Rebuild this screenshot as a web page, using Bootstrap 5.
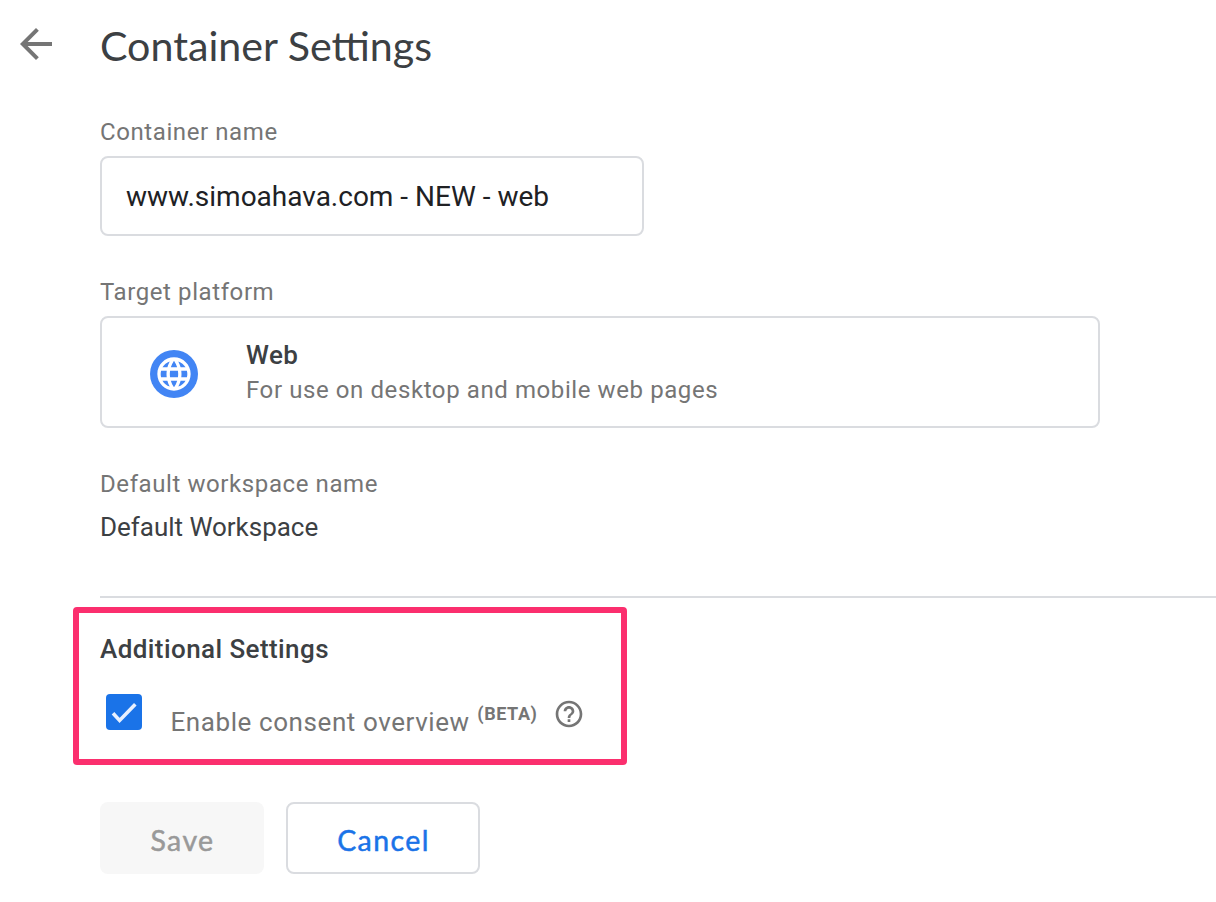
<!DOCTYPE html>
<html lang="en">
<head>
<meta charset="utf-8">
<meta name="viewport" content="width=device-width, initial-scale=1">
<title>Container Settings</title>
<link href="https://cdn.jsdelivr.net/npm/bootstrap@5.3.0/dist/css/bootstrap.min.css" rel="stylesheet">
<script src="https://cdn.jsdelivr.net/npm/bootstrap@5.3.0/dist/js/bootstrap.bundle.min.js" defer></script>
<style>
body { font-family: Roboto, "Liberation Sans", sans-serif; color: #3c4043; height: 902px; overflow: hidden; }
.page-head { height: 116px; padding-left: 12px; padding-top: 20px; }
.back-btn { width: 48px; height: 48px; margin-right: 40px; color: #757575; }
.page-title { font-family: Lato, sans-serif; font-size: 41.2px; line-height: 50px; }
.settings { padding-left: 100px; }
.caption { font-size: 24px; line-height: 32px; letter-spacing: .59px; color: #757575; }
.field-gap { margin-top: 40px; }
.outlined { border: 2px solid #dadce0; border-radius: 8px; }
.name-input { width: 544px; height: 80px; margin-top: 8px; padding: 0 24px; font-size: 28px; color: #202124; box-shadow: none; }
.platform { width: 1000px; height: 112px; margin-top: 8px; padding-left: 48px; }
.platform-icon { margin-top: 4px; }
.platform-title { font-size: 26px; font-weight: 500; line-height: 34px; letter-spacing: .4px; margin-bottom: 2px; }
.workspace { font-size: 26px; line-height: 34px; margin-top: 10px; letter-spacing: -.03px; }
.rule { height: 2px; margin-top: 52px; background: #dadce0; }
.highlight { width: 554px; height: 158px; margin: 9px 0 0 73px; border: 6px solid #fb2f6e; border-radius: 4px; padding: 19px 0 0 21px; }
.section-title { font-size: 26px; font-weight: 500; line-height: 34px; letter-spacing: .42px; }
.option { padding: 28px 0 0 6px; }
.tick { width: 36px; height: 36px; background: #1a73e8; border-radius: 4px; }
.consent { font-size: 26px; line-height: 34px; letter-spacing: .58px; color: #757575; margin: 11px 0 0 28.5px; }
.beta { font-size: 18px; line-height: 24px; letter-spacing: .6px; color: #757575; margin: 8px 0 0 7.5px; }
.help { margin: 4px 0 0 15.5px; color: #757575; }
.actions { gap: 22px; margin-top: 37px; }
.action { height: 72px; font-family: Lato, sans-serif; font-size: 28.5px; border-radius: 8px; padding: 4px 0 0 1px; letter-spacing: 1.4px; -webkit-text-stroke: .5px currentColor; }
.save, .save:disabled { width: 164px; background: #f7f7f7; color: #999; border: 0; opacity: 1; }
.cancel { width: 194px; border: 2px solid #dadce0; color: #1a73e8; }
</style>
</head>
<body class="bg-white">
<header class="page-head d-flex align-items-start">
  <a class="back-btn d-block" href="#" aria-label="Back"><svg class="d-block" width="48" height="48" viewBox="0 0 24 24" fill="currentColor"><path d="M20 11H7.83l5.59-5.59L12 4l-8 8 8 8 1.41-1.41L7.83 13H20v-2z"/></svg></a>
  <h1 class="page-title fw-normal m-0">Container Settings</h1>
</header>
<main>
  <div class="settings">
    <label class="caption d-block" for="cname">Container name</label>
    <input id="cname" class="form-control outlined name-input" value="www.simoahava.com - NEW - web">
    <div class="caption field-gap">Target platform</div>
    <div class="outlined platform d-flex align-items-center">
      <svg class="platform-icon" width="48" height="48" viewBox="0 0 48 48"><circle cx="24" cy="24" r="24" fill="#4285f4"/><path fill="#fff" transform="translate(4 4) scale(1.6667)" d="M11.99 2C6.47 2 2 6.48 2 12s4.47 10 9.99 10C17.52 22 22 17.52 22 12S17.52 2 11.99 2zm6.93 6h-2.95c-.32-1.25-.78-2.45-1.38-3.56 1.84.63 3.37 1.91 4.33 3.56zM12 4.04c.83 1.2 1.48 2.53 1.91 3.96h-3.82c.43-1.43 1.08-2.76 1.91-3.96zM4.26 14C4.1 13.36 4 12.69 4 12s.1-1.36.26-2h3.38c-.08.66-.14 1.32-.14 2s.06 1.34.14 2H4.26zm.82 2h2.95c.32 1.25.78 2.45 1.38 3.56-1.84-.63-3.37-1.9-4.33-3.56zm2.95-8H5.08c.96-1.66 2.49-2.93 4.33-3.56C8.81 5.55 8.35 6.75 8.03 8zM12 19.96c-.83-1.2-1.48-2.53-1.91-3.96h3.82c-.43 1.43-1.08 2.76-1.91 3.96zM14.34 14H9.66c-.09-.66-.16-1.32-.16-2s.07-1.35.16-2h4.68c.09.65.16 1.32.16 2s-.07 1.34-.16 2zm.25 5.56c.6-1.11 1.06-2.31 1.38-3.56h2.95c-.96 1.65-2.49 2.93-4.33 3.56zM16.36 14c.08-.66.14-1.32.14-2s-.06-1.34-.14-2h3.38c.16.64.26 1.31.26 2s-.1 1.36-.26 2h-3.38z"/></svg>
      <div class="ms-5">
        <div class="platform-title">Web</div>
        <div class="caption">For use on desktop and mobile web pages</div>
      </div>
    </div>
    <div class="caption field-gap">Default workspace name</div>
    <div class="workspace">Default Workspace</div>
    <div class="rule"></div>
  </div>
  <section class="highlight">
    <h2 class="section-title m-0">Additional Settings</h2>
    <div class="option d-flex align-items-start">
      <div class="tick" role="checkbox" aria-checked="true" aria-label="Enable consent overview"><svg class="d-block" width="36" height="36" viewBox="0 0 36 36"><path d="M7 19.3l6.6 7.1L29.3 10.3" fill="none" stroke="#e8f0fe" stroke-width="3.6"/></svg></div>
      <span class="consent">Enable consent overview</span>
      <span class="beta fw-bold">(BETA)</span>
      <svg class="help" width="32" height="32" viewBox="0 0 24 24" fill="currentColor"><path d="M11 18h2v-2h-2v2zm1-16C6.48 2 2 6.48 2 12s4.48 10 10 10 10-4.48 10-10S17.52 2 12 2zm0 18c-4.41 0-8-3.59-8-8s3.59-8 8-8 8 3.59 8 8-3.59 8-8 8zm0-14c-2.21 0-4 1.79-4 4h2c0-1.1.9-2 2-2s2 .9 2 2c0 2-3 1.75-3 5h2c0-2.25 3-2.5 3-5 0-2.21-1.79-4-4-4z"/></svg>
    </div>
  </section>
  <div class="settings actions d-flex">
    <button class="btn action save" disabled>Save</button>
    <button class="btn action cancel">Cancel</button>
  </div>
</main>
</body>
</html>
